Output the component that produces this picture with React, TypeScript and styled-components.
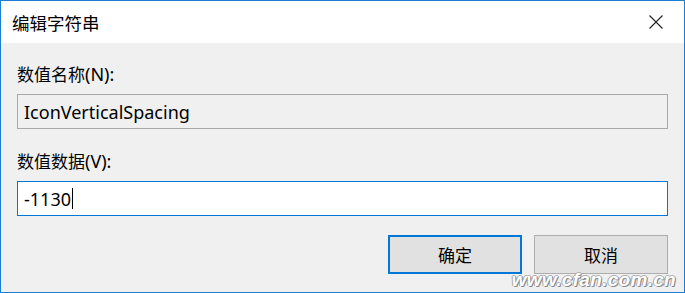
import React from 'react'
import styled, { createGlobalStyle } from 'styled-components'

const GlobalStyle = createGlobalStyle`
  html, body {
    margin: 0;
    padding: 0;
    background: #fff;
  }
  * {
    box-sizing: border-box;
  }
`

const uiFont = `"Segoe UI", "Noto Sans", "Noto Sans CJK SC", sans-serif`

const Window = styled.div`
  position: relative;
  width: 685px;
  height: 293px;
  border: 1px solid #1a7fd4;
  display: flex;
  flex-direction: column;
  font-family: ${uiFont};
  color: #000;
  overflow: hidden;
`

const TitleBar = styled.div`
  height: 42px;
  flex: none;
  background: #fff;
  display: flex;
  align-items: center;
  justify-content: space-between;
  padding: 0 16px 0 11px;
`

const Title = styled.span`
  font-size: 17.5px;
  line-height: 24px;
  margin-top: 1px;
`

const CloseButton = styled.button`
  width: 24px;
  height: 24px;
  padding: 0;
  border: none;
  background: transparent;
  display: flex;
  align-items: center;
  justify-content: center;
`

const Body = styled.div`
  flex: 1;
  background: #f0f0f0;
  padding: 19px 16px 0 16px;
  display: flex;
  flex-direction: column;
`

const Label = styled.div<{ $gap: number }>`
  font-size: 17px;
  line-height: 24px;
  margin-bottom: ${p => p.$gap}px;
`

const Latin = styled.span`
  font-size: 18px;
`

const Field = styled.div<{ $active?: boolean }>`
  height: 35px;
  border: 1px solid ${p => (p.$active ? '#0078d7' : '#a8a8a8')};
  background: ${p => (p.$active ? '#fff' : '#f0f0f0')};
  display: flex;
  align-items: center;
  padding: 0 6px;
  font-size: 18px;
  color: #000;
`

const Caret = styled.span`
  display: inline-block;
  width: 1px;
  height: 21px;
  background: #000;
  margin-left: 1px;
`

const Spacer = styled.div<{ $h: number }>`
  height: ${p => p.$h}px;
  flex: none;
`

const ButtonRow = styled.div`
  display: flex;
  justify-content: flex-end;
  gap: 12px;
  margin-top: 19px;
`

const DialogButton = styled.button<{ $default?: boolean }>`
  width: 134px;
  height: 39px;
  background: #e1e1e1;
  border: ${p => (p.$default ? '2px solid #0078d7' : '1px solid #adadad')};
  font-family: ${uiFont};
  font-size: 17px;
  color: #000;
  padding: 0;
`

const Watermark = styled.span`
  position: absolute;
  right: 8px;
  bottom: 1px;
  font-family: "Liberation Sans", Arial, sans-serif;
  font-weight: bold;
  font-style: italic;
  font-size: 19px;
  letter-spacing: 0.3px;
  color: #fff;
  text-shadow: 1px 1px 0 #8a8a8a, -1px 0 0 #a5a5a5, 0 -1px 0 #b0b0b0, 1px 0 0 #9a9a9a;
`

const App: React.FC = () => (
  <>
    <GlobalStyle />
    <Window>
      <TitleBar>
        <Title>编辑字符串</Title>
        <CloseButton aria-label="关闭">
          <svg width="14" height="14" viewBox="0 0 14 14">
            <path d="M0.5 0.5 L13.5 13.5 M13.5 0.5 L0.5 13.5" stroke="#222" strokeWidth="1.1" />
          </svg>
        </CloseButton>
      </TitleBar>
      <Body>
        <Label $gap={7}>
          数值名称<Latin>(N):</Latin>
        </Label>
        <Field>IconVerticalSpacing</Field>
        <Spacer $h={20} />
        <Label $gap={7}>
          数值数据<Latin>(V):</Latin>
        </Label>
        <Field $active>
          -1130
          <Caret />
        </Field>
        <ButtonRow>
          <DialogButton $default>确定</DialogButton>
          <DialogButton>取消</DialogButton>
        </ButtonRow>
      </Body>
      <Watermark>www.cfan.com.cn</Watermark>
    </Window>
  </>
)

export default App
